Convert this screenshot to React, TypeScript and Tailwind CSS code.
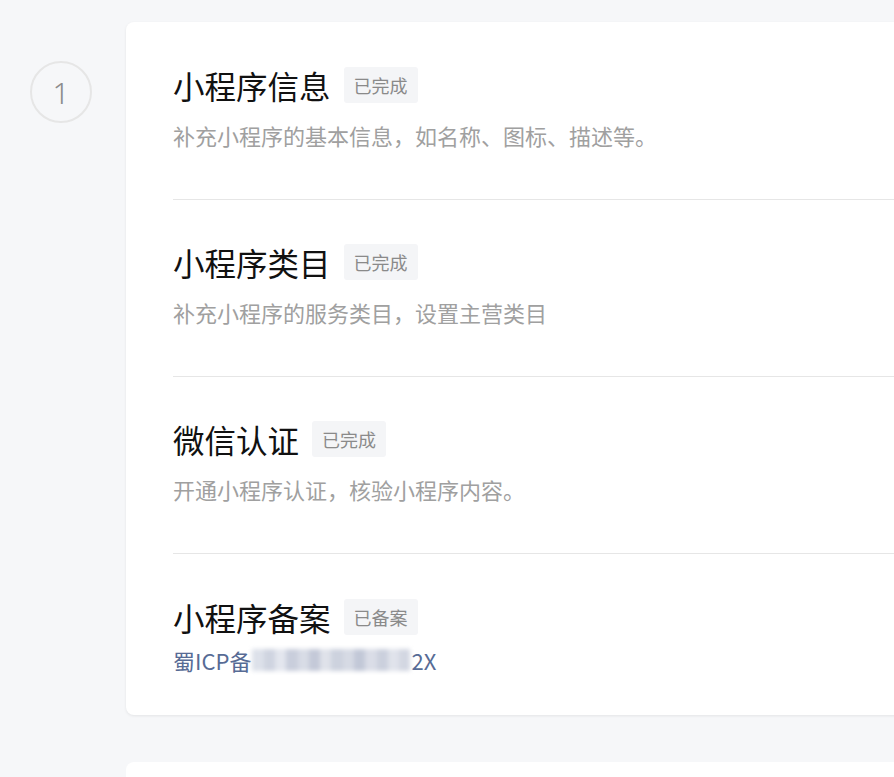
const steps = [
  {
    title: "小程序信息",
    badge: "已完成",
    desc: "补充小程序的基本信息，如名称、图标、描述等。",
  },
  {
    title: "小程序类目",
    badge: "已完成",
    desc: "补充小程序的服务类目，设置主营类目",
  },
  {
    title: "微信认证",
    badge: "已完成",
    desc: "开通小程序认证，核验小程序内容。",
  },
];

function Badge({ text }: { text: string }) {
  return (
    <span className="inline-flex h-9 items-center rounded-[3px] bg-[#f4f5f7] px-[10px] text-[18px] text-[#8a8a8a]">
      {text}
    </span>
  );
}

function Title({ title, badge }: { title: string; badge: string }) {
  return (
    <div className="flex h-10 items-center gap-[13px]">
      <h3 className="text-[31.5px] leading-10 font-normal text-[#111]">
        {title}
      </h3>
      <Badge text={badge} />
    </div>
  );
}

function Blurred() {
  const cells = [
    "#dde1ea", "#cfd4e0", "#e3e6ee", "#c9cedc", "#d8dce6", "#c4c9d8", "#dfe2ea",
    "#cdd2de", "#d6dae4", "#c2c8d7", "#dadde7", "#cbd0dd", "#e0e3eb", "#d3d7e2",
  ];
  return (
    <span className="mx-[1px] inline-flex h-[22px] w-[158px] overflow-hidden align-middle blur-[2px]">
      {cells.map((c, i) => (
        <span key={i} className="h-full flex-1" style={{ backgroundColor: c }} />
      ))}
    </span>
  );
}

export default function App() {
  return (
    <div
      className="h-[777px] w-screen overflow-hidden bg-[#f6f7f9] pt-[22px]"
      style={{ fontFamily: '"Noto Sans CJK SC", "Noto Sans", sans-serif' }}
    >
      <div className="flex">
        <div className="w-[126px] shrink-0 pl-[30px] pt-[39px]">
          <div className="flex h-[62px] w-[62px] items-center justify-center rounded-full border-2 border-[#e6e6e6] font-['Noto_Sans',sans-serif] text-[30px] font-light text-[#8c8c8c]">
            1
          </div>
        </div>
        <div className="w-[820px] shrink-0 rounded-lg bg-white pl-[47px] pt-px shadow-[0_1px_3px_rgba(0,0,0,0.08)]">
          {steps.map((s) => (
            <div key={s.title} className="border-b border-[#e6e6e6] pt-[42px] pb-[49px]">
              <Title title={s.title} badge={s.badge} />
              <p className="mt-[15px] text-[22px] leading-[30px] text-[#a0a0a0]">
                {s.desc}
              </p>
            </div>
          ))}
          <div className="pt-[43px] pb-[40px]">
            <Title title="小程序备案" badge="已备案" />
            <p className="mt-[8px] flex items-center text-[22px] leading-[30px] text-[#576b95]">
              蜀ICP备
              <Blurred />
              2X
            </p>
          </div>
        </div>
      </div>
      <div className="mt-[47px] ml-[126px] h-[60px] w-[820px] rounded-lg bg-white" />
    </div>
  );
}
